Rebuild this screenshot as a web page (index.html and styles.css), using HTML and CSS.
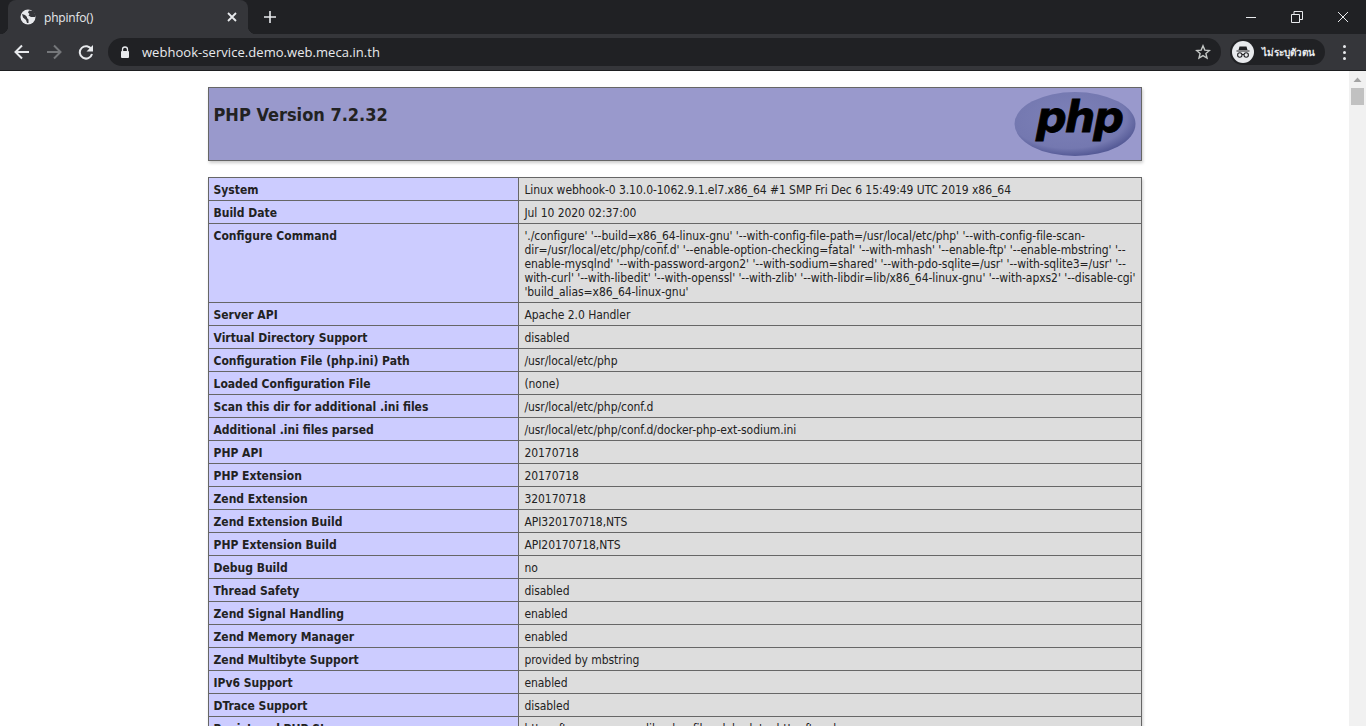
FILE: index.html
```html
<!DOCTYPE html>
<html lang="en">

<head>
    <meta charset="UTF-8">
    <title>phpinfo()</title>
    <link rel="stylesheet" href="styles.css">
</head>

<body>
    <div class="tabstrip">
        <div class="tab">
            <svg class="favicon" width="16" height="16" viewBox="0 0 16 16">
                <circle cx="8" cy="8" r="7.5" fill="#e8eaed"/>
                <path d="M2 5l3 1 2 2 0 1 1.5 1.5 0 3.5-1.5 0-1-3-3-2.500zM9 1.500l-1 2 1.500 1.500-1 1.500 2.500 1.500 4 0 .5-2-2-4z" fill="#35363a"/>
            </svg>
            <span class="tab-title">phpinfo()</span>
            <svg class="tab-close" width="10" height="10" viewBox="0 0 10 10">
                <path d="M1 1l8 8M9 1l-8 8" stroke="#e8eaed" stroke-width="1.800"/>
            </svg>
        </div>
        <svg class="new-tab" width="12" height="12" viewBox="0 0 12 12">
            <path d="M6 0v12M0 6h12" stroke="#e8eaed" stroke-width="1.600"/>
        </svg>
        <div class="window-btns">
            <svg width="12" height="12" viewBox="0 0 12 12"><path d="M1 6.500h10" stroke="#e8eaed"/></svg>
            <svg width="12" height="12" viewBox="0 0 12 12"><path d="M.5 3.500h8v8h-8zM3 3.500v-3h8.500v8h-3" fill="none" stroke="#e8eaed"/></svg>
            <svg width="12" height="12" viewBox="0 0 12 12"><path d="M1 1l10 10M11 1l-10 10" stroke="#e8eaed"/></svg>
        </div>
    </div>

    <div class="toolbar">
        <svg class="nav-icon" width="16" height="16" viewBox="0 0 16 16">
            <path d="M15 8H2M8 1.500L1.500 8 8 14.500" fill="none" stroke="#e8eaed" stroke-width="2"/>
        </svg>
        <svg class="nav-icon" width="16" height="16" viewBox="0 0 16 16">
            <path d="M1 8h13M8 1.500L14.500 8 8 14.500" fill="none" stroke="#75777a" stroke-width="2"/>
        </svg>
        <svg class="nav-icon" width="16" height="16" viewBox="0 0 16 16">
            <path d="M13.500 5.500A6.200 6.200 0 1 0 14 10" fill="none" stroke="#e8eaed" stroke-width="2"/>
            <path d="M15 1v6.500H8.500z" fill="#e8eaed"/>
        </svg>
        <div class="omnibox">
            <svg width="10" height="13" viewBox="0 0 10 13">
                <path d="M2.500 6V3.500a2.500 2.500 0 0 1 5 0V6" fill="none" stroke="#e8eaed" stroke-width="1.300"/>
                <rect x="1" y="5" width="8" height="7" rx="1" fill="#e8eaed"/>
            </svg>
            <span class="url">webhook-service.demo.web.meca.in.th</span>
            <svg class="star" width="16" height="16" viewBox="0 0 16 16">
                <path d="M8 1.800l1.800 4.300 4.600.4-3.500 3 1.100 4.500L8 11.600 4 14l1.100-4.500-3.500-3 4.600-.4z" fill="none" stroke="#c4c7c5" stroke-width="1.400"/>
            </svg>
        </div>
        <div class="incognito">
            <svg width="22" height="22" viewBox="0 0 22 22">
                <circle cx="11" cy="11" r="11" fill="#e8eaed"/>
                <path d="M7.500 5.500h7l1 3.500h-9zM4.500 9.500h13v1h-13z" fill="#202124"/>
                <circle cx="7.800" cy="14" r="2.200" fill="none" stroke="#202124" stroke-width="1.100"/>
                <circle cx="14.200" cy="14" r="2.200" fill="none" stroke="#202124" stroke-width="1.100"/>
                <path d="M10 13.500h2" stroke="#202124"/>
            </svg>
            <span class="incognito-label">ไม่ระบุตัวตน</span>
        </div>
        <div class="menu-dots"><i></i><i></i><i></i></div>
    </div>

    <div class="viewport">
        <div class="page">
            <div class="center">
                <table>
                    <tr class="h">
                        <td>
                            <svg class="php-logo" width="122" height="64" viewBox="0 0 122 64">
                                <defs>
                                    <radialGradient id="logo-fill" cx="45%" cy="40%" r="60%">
                                        <stop offset="0" stop-color="#7d81b8"/>
                                        <stop offset="0.800" stop-color="#7478b0"/>
                                        <stop offset="1" stop-color="#555a96"/>
                                    </radialGradient>
                                </defs>
                                <ellipse cx="61" cy="32" rx="60.500" ry="32" fill="url(#logo-fill)"/>
                                <text class="php-word" x="65" y="40" text-anchor="middle">php</text>
                            </svg>
                            <h1>PHP Version 7.2.32</h1>
                        </td>
                    </tr>
                </table>
                <table>
                    <tr><td class="e">System</td><td class="v">Linux webhook-0 3.10.0-1062.9.1.el7.x86_64 #1 SMP Fri Dec 6 15:49:49 UTC 2019 x86_64</td></tr>
                    <tr><td class="e">Build Date</td><td class="v">Jul 10 2020 02:37:00</td></tr>
                    <tr><td class="e">Configure Command</td><td class="v">'./configure' '--build=x86_64-linux-gnu' '--with-config-file-path=/usr/local/etc/php' '--with-config-file-scan-<br>dir=/usr/local/etc/php/conf.d' '--enable-option-checking=fatal' '--with-mhash' '--enable-ftp' '--enable-mbstring' '--<br>enable-mysqlnd' '--with-password-argon2' '--with-sodium=shared' '--with-pdo-sqlite=/usr' '--with-sqlite3=/usr' '--<br>with-curl' '--with-libedit' '--with-openssl' '--with-zlib' '--with-libdir=lib/x86_64-linux-gnu' '--with-apxs2' '--disable-cgi'<br>'build_alias=x86_64-linux-gnu'</td></tr>
                    <tr><td class="e">Server API</td><td class="v">Apache 2.0 Handler</td></tr>
                    <tr><td class="e">Virtual Directory Support</td><td class="v">disabled</td></tr>
                    <tr><td class="e">Configuration File (php.ini) Path</td><td class="v">/usr/local/etc/php</td></tr>
                    <tr><td class="e">Loaded Configuration File</td><td class="v">(none)</td></tr>
                    <tr><td class="e">Scan this dir for additional .ini files</td><td class="v">/usr/local/etc/php/conf.d</td></tr>
                    <tr><td class="e">Additional .ini files parsed</td><td class="v">/usr/local/etc/php/conf.d/docker-php-ext-sodium.ini</td></tr>
                    <tr><td class="e">PHP API</td><td class="v">20170718</td></tr>
                    <tr><td class="e">PHP Extension</td><td class="v">20170718</td></tr>
                    <tr><td class="e">Zend Extension</td><td class="v">320170718</td></tr>
                    <tr><td class="e">Zend Extension Build</td><td class="v">API320170718,NTS</td></tr>
                    <tr><td class="e">PHP Extension Build</td><td class="v">API20170718,NTS</td></tr>
                    <tr><td class="e">Debug Build</td><td class="v">no</td></tr>
                    <tr><td class="e">Thread Safety</td><td class="v">disabled</td></tr>
                    <tr><td class="e">Zend Signal Handling</td><td class="v">enabled</td></tr>
                    <tr><td class="e">Zend Memory Manager</td><td class="v">enabled</td></tr>
                    <tr><td class="e">Zend Multibyte Support</td><td class="v">provided by mbstring</td></tr>
                    <tr><td class="e">IPv6 Support</td><td class="v">enabled</td></tr>
                    <tr><td class="e">DTrace Support</td><td class="v">disabled</td></tr>
                    <tr><td class="e">Registered PHP Streams</td><td class="v">https, ftps, compress.zlib, php, file, glob, data, http, ftp, phar</td></tr>
                </table>
            </div>
        </div>
        <div class="scrollbar">
            <svg width="17" height="17" viewBox="0 0 17 17"><path d="M4.500 11l4-4.500 4 4.500z" fill="#a3a3a3"/></svg>
            <div class="scroll-thumb"></div>
        </div>
    </div>
</body>

</html>
```

FILE: styles.css
```css
html, body {
    height: 100%;
    margin: 0;
    overflow: hidden;
}

body {
    display: flex;
    flex-direction: column;
    background-color: #fff;
    color: #222;
    font-family: "Open Sans", sans-serif;
}

.tabstrip {
    display: flex;
    align-items: center;
    height: 34px;
    background-color: #202124;
    flex-shrink: 0;
}

.tab {
    display: flex;
    align-items: center;
    position: relative;
    width: 240px;
    height: 34px;
    margin-left: 8px;
    padding: 0 11px 0 12px;
    box-sizing: border-box;
    background-color: #35363a;
    border-radius: 8px 8px 0 0;
}

.tab::before,
.tab::after {
    content: "";
    position: absolute;
    bottom: 0;
    width: 8px;
    height: 8px;
}

.tab::before {
    left: -8px;
    background: radial-gradient(circle at 0 0, #202124 8px, #35363a 8.500px);
}

.tab::after {
    right: -8px;
    background: radial-gradient(circle at 100% 0, #202124 8px, #35363a 8.500px);
}

.tab-title {
    flex: 1;
    margin-left: 8px;
    color: #e8eaed;
    font-size: 12px;
    letter-spacing: -0.2px;
}

.new-tab {
    margin-left: 16px;
}

.window-btns {
    display: flex;
    gap: 34px;
    margin-left: auto;
    margin-right: 17px;
}

.toolbar {
    display: flex;
    align-items: center;
    height: 36px;
    padding-left: 14px;
    background-color: #35363a;
    border-bottom: 1px solid #1d1e20;
    flex-shrink: 0;
}

.nav-icon {
    margin-right: 16px;
}

.omnibox {
    display: flex;
    align-items: center;
    width: 1113px;
    height: 28px;
    margin-left: -2px;
    padding: 0 10px 0 12px;
    box-sizing: border-box;
    background-color: #202124;
    border-radius: 14px;
}

.url {
    flex: 1;
    margin-left: 12px;
    color: #e8eaed;
    font-size: 13px;
    letter-spacing: 0.05px;
}

.incognito {
    display: flex;
    align-items: center;
    width: 95px;
    height: 26px;
    margin-left: 9px;
    padding-left: 2px;
    box-sizing: border-box;
    background-color: #202124;
    border-radius: 13px;
}

.incognito-label {
    margin-left: 8px;
    color: #e8eaed;
    font-family: "Noto Sans", sans-serif;
    font-size: 10px;
    font-weight: bold;
    white-space: nowrap;
}

.menu-dots {
    display: flex;
    flex-direction: column;
    gap: 3px;
    margin-left: 18px;
}

.menu-dots i {
    width: 3px;
    height: 3px;
    border-radius: 50%;
    background-color: #e8eaed;
}

.viewport {
    display: flex;
    flex: 1;
    min-height: 0;
}

.page {
    flex: 1;
    min-width: 0;
    overflow: hidden;
}

.center {
    text-align: center;
    padding-top: 16px;
    font-family: "DejaVu Sans", sans-serif;
    font-stretch: condensed;
}

.center table {
    width: 934px;
    margin: 0 auto 16px;
    text-align: left;
    border-collapse: collapse;
    box-shadow: 1px 2px 3px #ccc;
}

td {
    padding: 5px 5px 3px;
    border: 1px solid #666;
    font-size: 12px;
    line-height: 14px;
    vertical-align: baseline;
}

h1 {
    margin: 12px 0;
    font-size: 18px;
    line-height: 21px;
}

.h td {
    padding: 4px 5px;
    background-color: #99c;
    font-weight: bold;
}

.e {
    width: 300px;
    background-color: #ccf;
    font-weight: bold;
}

.v {
    background-color: #ddd;
    letter-spacing: -0.05px;
    white-space: nowrap;
}

.php-logo {
    float: right;
}

.php-word {
    font-family: "DejaVu Sans", sans-serif;
    font-stretch: normal;
    font-size: 43px;
    font-weight: bold;
    font-style: italic;
    fill: #000;
    stroke: #000;
    stroke-width: 0.800px;
    letter-spacing: -2px;
}

.scrollbar {
    width: 17px;
    background-color: #f1f1f1;
    flex-shrink: 0;
}

.scrollbar svg {
    display: block;
}

.scroll-thumb {
    height: 17px;
    margin: 0 2px;
    background-color: #c1c1c1;
}
```
